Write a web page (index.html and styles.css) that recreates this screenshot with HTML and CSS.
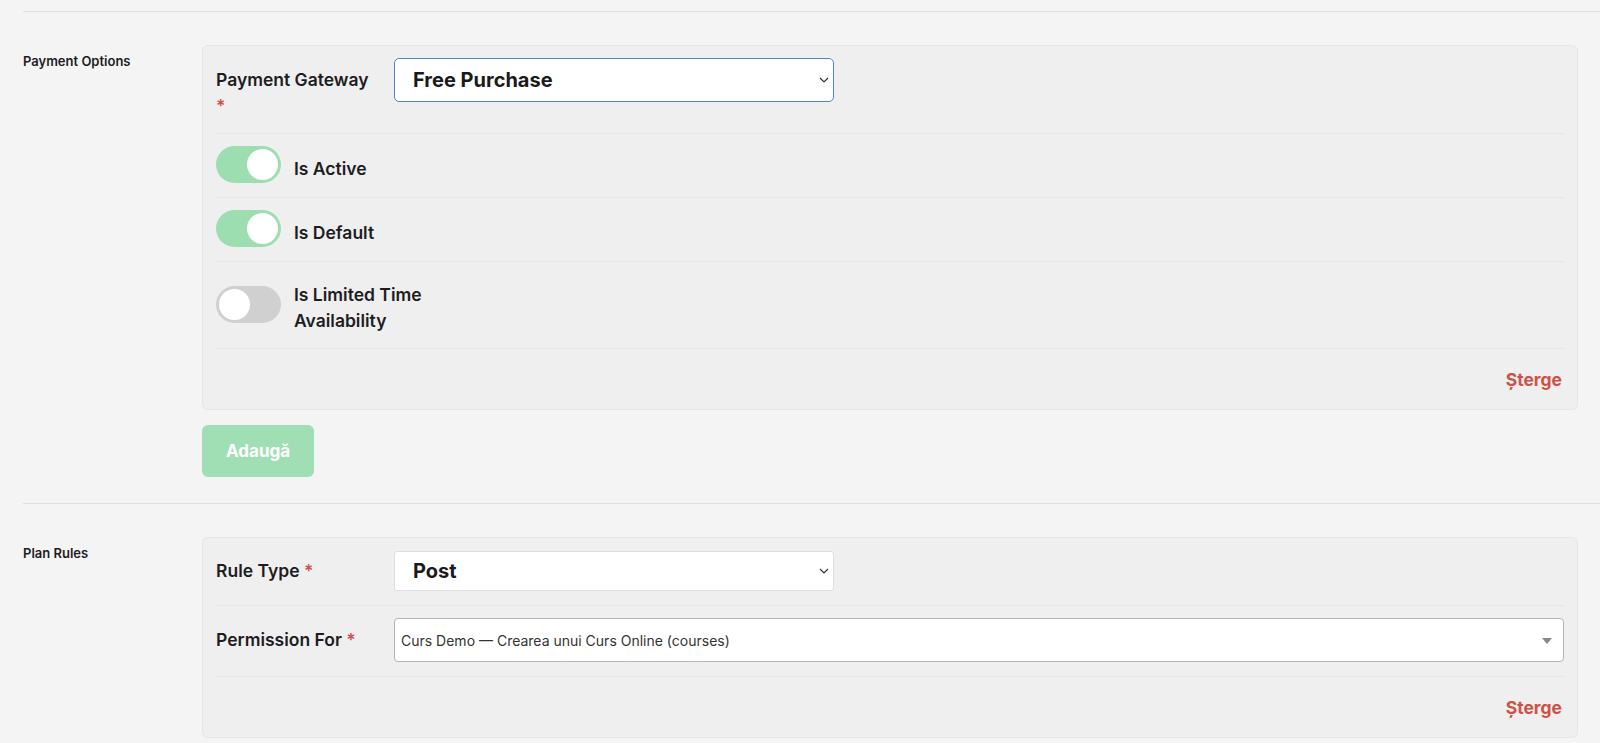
FILE: index.html
```html
<!DOCTYPE html>
<html lang="ro">

<head>
    <meta charset="UTF-8">
    <meta name="viewport" content="width=device-width, initial-scale=1.0">
    <title>Plan Settings</title>
    <link rel="stylesheet" href="styles.css">
</head>

<body>

    <div class="page">
        <hr class="divider">

        <section class="setting">
            <div class="setting-label">Payment Options</div>
            <div class="setting-body">
                <div class="repeater-card">
                    <div class="field-row">
                        <label class="field-label wide">Payment Gateway <span class="req">*</span></label>
                        <div class="select-wrap gateway">
                            <select class="big-select focused">
                                <option>Free Purchase</option>
                            </select>
                            <svg class="chevron" width="10" height="6" viewBox="0 0 10 6"><path d="M1 1l4 4 4-4" fill="none" stroke="#333" stroke-width="1.2"/></svg>
                        </div>
                    </div>
                    <div class="field-row">
                        <span class="switch on"><span class="knob"></span></span>
                        <span class="switch-label">Is Active</span>
                    </div>
                    <div class="field-row">
                        <span class="switch on"><span class="knob"></span></span>
                        <span class="switch-label">Is Default</span>
                    </div>
                    <div class="field-row">
                        <span class="switch"><span class="knob"></span></span>
                        <span class="switch-label">Is Limited Time Availability</span>
                    </div>
                    <div class="card-actions">
                        <a href="#" class="remove-link">Șterge</a>
                    </div>
                </div>
                <button class="add-btn">Adaugă</button>
            </div>
        </section>

        <hr class="divider">

        <section class="setting">
            <div class="setting-label">Plan Rules</div>
            <div class="setting-body">
                <div class="repeater-card">
                    <div class="field-row rule-row">
                        <label class="field-label">Rule Type <span class="req">*</span></label>
                        <div class="select-wrap gateway">
                            <select class="big-select plain">
                                <option>Post</option>
                            </select>
                            <svg class="chevron" width="10" height="6" viewBox="0 0 10 6"><path d="M1 1l4 4 4-4" fill="none" stroke="#333" stroke-width="1.2"/></svg>
                        </div>
                    </div>
                    <div class="field-row">
                        <label class="field-label">Permission For <span class="req">*</span></label>
                        <div class="select-wrap full">
                            <select class="small-select">
                                <option>Curs Demo — Crearea unui Curs Online (courses)</option>
                            </select>
                            <svg class="caret" width="10" height="6" viewBox="0 0 10 6"><path d="M0 0h10L5 6z" fill="#888"/></svg>
                        </div>
                    </div>
                    <div class="card-actions">
                        <a href="#" class="remove-link">Șterge</a>
                    </div>
                </div>
            </div>
        </section>
    </div>

</body>

</html>
```

FILE: styles.css
```css
body {
    font-family: Inter, "Noto Sans", Arial, sans-serif;
    margin: 0;
    background-color: #f4f4f4;
    color: #1d1d1f;
}

.page {
    padding: 11px 0 0 23px;
}

.divider {
    margin: 0;
    border: none;
    border-top: 1px solid #dfdfe2;
}

.setting {
    display: flex;
    padding: 33px 22px 26px 0;
}

.setting-label {
    flex: 0 0 179px;
    padding-top: 8px;
    font-size: 13px;
    line-height: 16px;
    font-weight: 600;
}

.setting-body {
    flex: 1;
}

.repeater-card {
    background-color: #efefef;
    border: 1px solid #e6e6e6;
    border-radius: 6px;
    padding: 0 13px 0 13px;
}

.field-row {
    display: flex;
    align-items: center;
    padding: 12px 0 14px;
    border-bottom: 1px solid #e6e6e6;
}

.field-row:first-child {
    align-items: flex-start;
}

.rule-row {
    padding: 13px 0 14px;
}

.rule-row.field-row:first-child {
    align-items: center;
}

.field-label {
    flex: 0 0 178px;
    box-sizing: border-box;
    padding-right: 18px;
    font-size: 17.5px;
    line-height: 26px;
    font-weight: 600;
}

.field-label.wide {
    margin-top: 9px;
}

.req {
    color: #d0504a;
}

.select-wrap {
    position: relative;
}

.select-wrap.gateway {
    width: 440px;
}

.select-wrap.full {
    flex: 1;
}

select {
    -webkit-appearance: none;
    appearance: none;
    width: 100%;
    box-sizing: border-box;
    background-color: #fff;
    font-family: Inter, "Noto Sans", Arial, sans-serif;
    color: #1a1a1a;
    outline: none;
}

.big-select {
    height: 44px;
    padding: 0 30px 0 18px;
    font-size: 20px;
    font-weight: 700;
    border-radius: 5px;
}

.big-select.focused {
    border: 1px solid #5583c4;
}

.big-select.plain {
    height: 40px;
    border: 1px solid #dedede;
    border-radius: 3px;
}

.small-select {
    height: 44px;
    padding: 0 30px 0 6px;
    font-size: 14px;
    color: #333;
    border: 1px solid #b4b4b4;
    border-radius: 4px;
}

.chevron {
    position: absolute;
    right: 5px;
    top: 50%;
    margin-top: -3px;
    pointer-events: none;
}

.caret {
    position: absolute;
    right: 12px;
    top: 50%;
    margin-top: -2px;
    pointer-events: none;
}

.switch {
    display: flex;
    align-items: center;
    flex: 0 0 65px;
    height: 37px;
    box-sizing: border-box;
    padding: 0 3px;
    border-radius: 19px;
    background-color: #d0d0d0;
}

.switch.on {
    justify-content: flex-end;
    background-color: #9ddeb1;
}

.knob {
    width: 31px;
    height: 31px;
    border-radius: 50%;
    background-color: #fff;
}

.switch-label {
    width: 140px;
    margin-left: 13px;
    padding-top: 8px;
    font-size: 17.5px;
    line-height: 26px;
    font-weight: 600;
}

.card-actions {
    display: flex;
    justify-content: flex-end;
    align-items: center;
    height: 60px;
    padding-right: 2px;
}

.remove-link {
    font-size: 17.5px;
    font-weight: 700;
    color: #cd5147;
    text-decoration: none;
}

.add-btn {
    display: block;
    margin-top: 15px;
    height: 52px;
    padding: 0 24px;
    border: none;
    border-radius: 6px;
    background-color: #9fdfb3;
    color: #fff;
    font-family: Inter, "Noto Sans", Arial, sans-serif;
    font-size: 17px;
    font-weight: 700;
    cursor: pointer;
}
```
